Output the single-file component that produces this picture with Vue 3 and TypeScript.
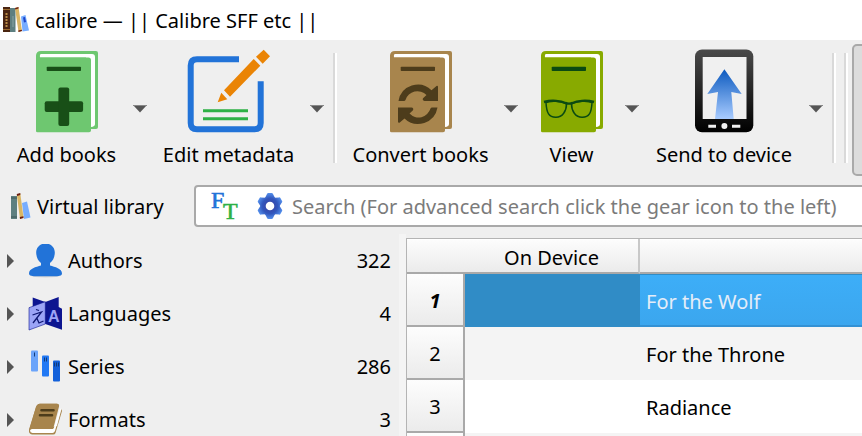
<script setup lang="ts">
import { ref } from 'vue'

type ToolIcon = 'add' | 'edit' | 'convert' | 'view' | 'send'
type CategoryIcon = 'authors' | 'languages' | 'series' | 'formats'

interface Tool {
  icon: ToolIcon
  label: string
  separated?: boolean
}

interface Category {
  icon: CategoryIcon
  label: string
  count: number
}

const tools: Tool[] = [
  { icon: 'add', label: 'Add books' },
  { icon: 'edit', label: 'Edit metadata', separated: true },
  { icon: 'convert', label: 'Convert books' },
  { icon: 'view', label: 'View' },
  { icon: 'send', label: 'Send to device' },
]

const bookColors: Record<string, { cover: string; ink: string }> = {
  add: { cover: '#6ec770', ink: '#184f17' },
  convert: { cover: '#a8854d', ink: '#4d3c1b' },
  view: { cover: '#88aa00', ink: '#0b4a12' },
}

const categories: Category[] = [
  { icon: 'authors', label: 'Authors', count: 322 },
  { icon: 'languages', label: 'Languages', count: 4 },
  { icon: 'series', label: 'Series', count: 286 },
  { icon: 'formats', label: 'Formats', count: 3 },
]

const books: string[] = ['For the Wolf', 'For the Throne', 'Radiance']
const selected = ref(0)
const query = ref('')
const teeth = [0, 60, 120, 180, 240, 300]
</script>

<template>
  <div class="window">
    <header class="titlebar">
      <svg class="app-icon" viewBox="0 0 26 26" aria-hidden="true">
        <rect x="0" y="0" width="7" height="25" fill="#4a2511" />
        <path d="M0 2.5H7M0 22.5H7" stroke="#9a6a2e" />
        <path d="M3.5 6V20" stroke="#b98a45" stroke-width="2" stroke-dasharray="2 1" />
        <rect x="7" y="1" width="5.500" height="24" fill="#5d7f80" />
        <path d="M10 9V20" stroke="#8aa5a4" />
        <path d="M18 9.500L22.500 8L26 23.500L19.500 24.500Z" fill="#77adff" />
        <path d="M20 10.500L22 10L23 15L21 15.500Z" fill="#1c44c8" />
        <path d="M12 1L15.500 0L19 24L15.500 25Z" fill="#d9b665" />
        <path d="M12 1L15.500 0V1.500L12.300 2.500ZM15.300 23.500L18.800 22.800L19 24L15.500 25Z" fill="#6b1d12" />
      </svg>
      <h1 class="title">calibre — || Calibre SFF etc ||</h1>
    </header>

    <nav class="toolbar" aria-label="Main toolbar">
      <div v-for="tool in tools" :key="tool.icon" class="tool" :class="[tool.icon, { separated: tool.separated }]">
        <button type="button" class="tool-main">
          <svg v-if="bookColors[tool.icon]" class="tool-icon" width="62" height="84" viewBox="0 -2 62 84" aria-hidden="true">
            <path d="M5 0H60Q62 0 62 2V76Q62 78 60 78H0V5Q0 0 5 0Z" :fill="bookColors[tool.icon].cover" />
            <path d="M5 3H56Q59 3 59 6V73Q59 75.500 55 76H50V6.500H4Q3.500 3 5 3Z" fill="#fff" />
            <path d="M0 4L4 6.500H52.500Q55 6.500 55 9V79.500Q55 81.300 53 81.300H1.500Q0 81.300 0 80Z" :fill="bookColors[tool.icon].cover" />
            <rect x="10.700" y="15.700" width="34.300" height="4.300" rx=".8" :fill="bookColors[tool.icon].ink" />
            <g v-if="tool.icon === 'add'" :fill="bookColors.add.ink">
              <rect x="8.700" y="50.300" width="38.400" height="10.800" rx="2" />
              <rect x="22.400" y="36.600" width="10.800" height="38.400" rx="2" />
            </g>
            <g v-else-if="tool.icon === 'convert'" :fill="bookColors.convert.ink">
              <path d="M8.500 50A19.600 19.600 0 0 1 41.500 39.200L46.500 34.900Q48 34.500 48 36V50H34.500Q32 49.500 33 47.300L36.500 44A12.500 12.500 0 0 0 15.500 49Q15 50 14 50Z" />
              <path transform="rotate(180 28 53.300)" d="M8.500 50A19.600 19.600 0 0 1 41.500 39.200L46.500 34.900Q48 34.500 48 36V50H34.500Q32 49.500 33 47.300L36.500 44A12.500 12.500 0 0 0 15.500 49Q15 50 14 50Z" />
            </g>
            <g v-else fill="none" :stroke="bookColors.view.ink" stroke-width="1.500">
              <path d="M5 51.500C10 49.500 20 49.800 25.500 52.800C25.500 60 21.500 66.300 15 66.300C8 66.500 5.500 62 5 51.500Z" />
              <path d="M51 51.500C46 49.500 36 49.800 30.500 52.800C30.500 60 34.500 66.300 41 66.300C48 66.500 50.500 62 51 51.500Z" />
              <path d="M3 51C11 48.800 20 50 24.500 52Q28 53.200 31.500 52C36 50 45 48.800 53 51" stroke-width="2.400" />
            </g>
          </svg>

          <svg v-else-if="tool.icon === 'edit'" class="tool-icon" width="84" height="84" viewBox="0 0 84 84" aria-hidden="true">
            <path d="M52 10.200H10Q3.700 10.200 3.700 16.500V74Q3.700 80.300 10 80.300H67.400Q73.700 80.300 73.700 74V32.300" fill="none" stroke="#2273d8" stroke-width="6" />
            <path d="M16 61.700H61M16 69.700H61" stroke="#2eb146" stroke-width="3" />
            <path d="M76.700 .7L83 7.300L75.700 14.700L69 7.700ZM66.700 10L73.300 16.700L43 47.700L37 41.300ZM34.300 43.700L40.300 50.300L30.700 53.300Z" fill="#ea8405" />
          </svg>

          <svg v-else class="tool-icon" width="60" height="84" viewBox="0 0 60 84" aria-hidden="true">
            <defs>
              <linearGradient id="body" x1="0" y1="0" x2="0" y2="1">
                <stop offset="0" stop-color="#4a4a4a" />
                <stop offset="1" stop-color="#000" />
              </linearGradient>
              <linearGradient id="beam" x1="0" y1="0" x2="0" y2="1">
                <stop offset="0" stop-color="#0c5abf" />
                <stop offset="1" stop-color="#a9ccff" />
              </linearGradient>
            </defs>
            <rect x="1" y=".500" width="58.300" height="82.800" rx="7" fill="url(#body)" />
            <rect x="8.700" y="8" width="43.800" height="62" fill="#f0f0f0" />
            <path d="M30.400 20.300L47.700 45L37.300 43L39.700 70H21L24 43L13.300 45Z" fill="url(#beam)" />
            <path d="M14.300 77.200H22M38 77.200H46.300" stroke="#f0f0f0" stroke-width="3" />
            <circle cx="30.400" cy="77" r="3" fill="#f0f0f0" />
          </svg>
          <span class="tool-label">{{ tool.label }}</span>
        </button>
        <button type="button" class="tool-drop" :aria-label="tool.label + ' menu'">
          <svg width="14" height="8" viewBox="0 0 14 8" aria-hidden="true">
            <path d="M0 0H14L7 7.500Z" fill="#555" />
            <path d="M0 .5H14" stroke="#888" />
          </svg>
        </button>
      </div>
      <span class="rule"></span>
      <span class="rule"></span>
      <span class="pressed"></span>
    </nav>

    <div class="searchbar">
      <button type="button" class="library">
        <svg width="20" height="27" viewBox="0 0 20 27" aria-hidden="true">
          <rect x="0" y="3" width="6" height="23" fill="#5d7f80" />
          <path d="M0 5H6M0 24H6" stroke="#3c5657" />
          <path d="M11 10L16 8.500L19.500 24.500L13 26Z" fill="#77adff" />
          <path d="M5.800 1.500L9.300 .5L12.500 24.500L9 26Z" fill="#d9b665" />
          <path d="M5.800 1L9.300 0V2L6 3ZM8.800 24L12.400 23.200L12.500 25L9 26Z" fill="#6b1d12" />
        </svg>
        <span>Virtual library</span>
      </button>
      <div class="search-box">
        <button type="button" class="icon-button" aria-label="Full text search">
          <svg class="letters" width="28" height="32" viewBox="0 0 28 32" aria-hidden="true">
            <text class="serif" x="0" y="18" fill="#2273d8" stroke="#2273d8">F</text>
            <text class="serif" x="12" y="29" fill="#2eb146" stroke="#2eb146">T</text>
          </svg>
        </button>
        <button type="button" class="icon-button" aria-label="Advanced search">
          <svg width="26" height="28" viewBox="-13 -14 26 28" aria-hidden="true">
            <defs>
              <radialGradient id="gear" gradientUnits="userSpaceOnUse" cx="0" cy="0" r="13">
                <stop offset="0" stop-color="#3b3b9b" />
                <stop offset=".6" stop-color="#3257bd" />
                <stop offset="1" stop-color="#5590ec" />
              </radialGradient>
            </defs>
            <g fill="url(#gear)">
              <circle r="9.800" />
              <path v-for="angle in teeth" :key="angle" :transform="`rotate(${angle})`" d="M-5 -8L-3 -12Q-2.700 -13 -1.700 -13H1.700Q2.700 -13 3 -12L5 -8Z" />
            </g>
            <circle r="4.300" fill="#fff" />
          </svg>
        </button>
        <input v-model="query" type="text" aria-label="Search" placeholder="Search (For advanced search click the gear icon to the left)" />
      </div>
    </div>

    <main class="content">
      <ul class="categories">
        <li v-for="category in categories" :key="category.icon">
          <button type="button" class="category">
            <svg class="expander" width="7" height="14" viewBox="0 0 7 14" aria-hidden="true">
              <path d="M0 0L7 7L0 14Z" fill="#555" />
            </svg>
            <svg v-if="category.icon === 'authors'" width="34" height="34" viewBox="0 0 34 34" aria-hidden="true">
              <ellipse cx="17.500" cy="32" rx="14" ry="1.500" fill="#d5d5d5" />
              <path d="M17.500 -.5C23 -.5 27 3.500 26.800 9C26.600 13 25 17 22 19V21.500C27 23 34 24.500 34 29.500C34 33 28 32.300 17.500 32.300C7 32.300 1 33 1 29.500C1 24.500 8 23 13 21.500V19C10 17 8.400 13 8.200 9C8 3.500 12 -.5 17.500 -.5Z" fill="#2273d8" />
            </svg>
            <svg v-else-if="category.icon === 'languages'" width="34" height="34" viewBox="0 0 34 34" aria-hidden="true">
              <path d="M4.700 .5L17.300 5L30.700 0V10L34 11.700V32.700L17.300 27L4.700 20Z" fill="#0d1590" />
              <path d="M1 10.700L17.300 4.700V27L1 33Z" fill="#9ba4f6" stroke="#0d1590" stroke-width=".6" />
              <path d="M8 12.500L11 13.500M4.500 18L13.500 15L5 26M9 21.500L11 26L15.500 24" fill="none" stroke="#0d1570" stroke-width="1.300" />
              <text class="latin" x="20" y="25" fill="#9ba4f6">A</text>
            </svg>
            <svg v-else-if="category.icon === 'series'" width="34" height="34" viewBox="0 0 34 34" aria-hidden="true">
              <rect x="3" y=".5" width="7" height="21" rx="1" fill="#6ba4fa" />
              <rect x="14" y="5.500" width="7" height="21" rx="1" fill="#2279f4" />
              <rect x="25" y="10.500" width="7" height="21" rx="1" fill="#1260da" />
              <path d="M6.500 2.500V6.500M16.500 7.500V11.500M18.500 7.500V11.500M26.500 12.500V16.500M28.500 12.500V16.500M30.500 12.500V16.500" stroke="#123a78" />
            </svg>
            <svg v-else width="34" height="34" viewBox="0 0 34 34" aria-hidden="true">
              <path d="M12 .8H29Q31 1 30.500 3L25 24L29 23L33.500 6L34 8L27.500 30Q27 31.500 25 31.500H4Q.5 31 1 26.500L8 4Q9 1 12 .8Z" fill="#a8854d" />
              <path d="M4 26H24Q25.500 26 26 24.500L32 5L33 6.500L27 28Q26 30 24.500 30H4.500Q2 29.500 2 27.500Q2.500 26 4 26Z" fill="#fff" />
              <path d="M12 .8H29Q31.500 1 31 3.500L25.500 24.500Q25 26 23.500 26H4Q2 26 1.500 26L8 4Q9 1 12 .8Z" fill="#a8854d" />
              <path d="M13.500 7.300H25.500M12 12.300H24" stroke="#4d3c1b" stroke-width="2.600" stroke-linecap="round" />
            </svg>
            <span class="category-name">{{ category.label }}</span>
            <span class="category-count">{{ category.count }}</span>
          </button>
        </li>
      </ul>

      <div class="book-list">
        <table>
          <thead>
            <tr>
              <th class="corner"></th>
              <th class="device" scope="col">On Device</th>
              <th scope="col"></th>
            </tr>
          </thead>
          <tbody>
            <tr v-for="(book, index) in books" :key="index" :class="{ selected: index === selected }" @click="selected = index">
              <th scope="row">{{ index + 1 }}</th>
              <td class="device-cell"></td>
              <td class="book-title">{{ book }}</td>
            </tr>
            <tr>
              <th></th>
              <td></td>
              <td></td>
            </tr>
          </tbody>
        </table>
      </div>
    </main>
  </div>
</template>

<style>
body {
  margin: 0;
  background: #efefef;
}
</style>

<style scoped>
.window {
  display: flex;
  flex-direction: column;
  height: 100vh;
  overflow: hidden;
  background: #efefef;
  color: #000;
  font-family: "Noto Sans", "Open Sans", sans-serif;
  font-size: 20px;
  line-height: 28px;
}

button,
input {
  margin: 0;
  padding: 0;
  border: 0;
  background: none;
  color: inherit;
  font: inherit;
}

svg {
  display: block;
  flex: none;
}

.titlebar {
  display: flex;
  flex: none;
  align-items: center;
  gap: 6px;
  height: 40px;
  padding-left: 3px;
  background: #fff;
}

.app-icon {
  width: 26px;
  height: 26px;
}

.title {
  margin: 0;
  padding-top: 2px;
  font-size: 20px;
  font-weight: 400;
  white-space: nowrap;
}

.toolbar {
  display: flex;
  flex: none;
  align-items: flex-start;
  height: 139px;
  padding-left: 6px;
}

.tool {
  display: flex;
  flex: none;
  padding-top: 9px;
}

.tool.separated {
  margin-right: 8px;
  padding: 0 3px 0 0;
  border-right: 2px solid #d9d9d9;
  box-shadow: 2px 0 #fff;
}

.tool.separated,
.rule {
  height: 110px;
  margin-top: 13px;
}

.tool.separated .tool-main,
.tool.separated .tool-drop {
  margin-top: -4px;
}

.tool-main {
  display: flex;
  flex-direction: column;
  align-items: center;
  gap: 8px;
  width: 155px;
  white-space: nowrap;
}

.add .tool-main {
  width: 121px;
}

.edit .tool-main {
  width: 151px;
}

.view .tool-main {
  width: 95px;
}

.send .tool-main {
  width: 158px;
}

.tool-label {
  display: block;
}

.tool-drop {
  display: flex;
  align-items: center;
  justify-content: center;
  width: 26px;
  height: 120px;
}

.rule {
  flex: none;
  width: 2px;
  margin-right: 8px;
  border-right: 2px solid #fff;
  background: #d9d9d9;
}

.tool + .rule {
  margin-left: 3px;
}

.rule + .rule {
  margin-right: 4px;
}

.pressed {
  box-sizing: border-box;
  flex: 1;
  height: 132px;
  margin: 4px -6px 0 0;
  border: 2px solid #a9a9a9;
  border-radius: 5px;
  background: #dcdcdc;
}

.searchbar {
  display: flex;
  flex: none;
  align-items: center;
  box-sizing: border-box;
  height: 55px;
  padding-bottom: 1px;
}

.library {
  display: flex;
  align-items: center;
  gap: 6px;
  flex: none;
  box-sizing: border-box;
  width: 194px;
  padding: 1px 0 0 11px;
  white-space: nowrap;
}

.search-box {
  display: flex;
  flex: 1;
  align-items: center;
  box-sizing: border-box;
  height: 42px;
  margin-right: -6px;
  padding-left: 15px;
  border: 2px solid #a9a9a9;
  border-radius: 4px;
  background: #fff;
}

.icon-button {
  flex: none;
  margin-right: 18px;
}

.icon-button + .icon-button {
  margin-right: 9px;
}

.search-box input {
  flex: 1;
  min-width: 0;
  padding-top: 2px;
  outline: 0;
}

.search-box input::placeholder {
  color: #7b7b7b;
  opacity: 1;
}

.letters {
  overflow: visible;
}

.serif {
  font-family: "Liberation Serif", serif;
  font-size: 24px;
  stroke-width: 0.6;
}

.latin {
  font-family: "Liberation Sans", sans-serif;
  font-size: 16px;
  font-weight: 700;
}

.content {
  display: flex;
  flex: 1;
  min-height: 0;
}

.categories {
  flex: none;
  width: 399px;
  margin: 0;
  padding: 0;
  list-style: none;
}

.category {
  display: flex;
  align-items: center;
  box-sizing: border-box;
  width: 100%;
  height: 53px;
  padding: 0 8px 0 7px;
  text-align: left;
}

.expander {
  margin-right: 14px;
}

.category-name {
  flex: 1;
  margin-left: 6px;
}

.book-list {
  flex: 1;
  min-width: 0;
  padding: 4px 0 0 7px;
  background: linear-gradient(90deg, #f4f4f4 7px, #efefef 7px);
}

table {
  width: 100%;
  border-collapse: separate;
  border-spacing: 0;
  table-layout: fixed;
  border-top: 1px solid #b4b4b4;
  border-left: 1px solid #b4b4b4;
  background: #fff;
}

th,
td {
  box-sizing: border-box;
  padding: 2px 0 0;
}

th {
  font-weight: 400;
  text-align: center;
}

thead th {
  height: 35px;
  padding-top: 5px;
  border-bottom: 2px solid #a9a9a9;
  background: linear-gradient(#fdfdfd, #ebebeb);
  box-shadow: inset 0 1px #fff;
}

.corner {
  width: 58px;
}

.device {
  width: 175px;
  border-right: 2px solid #c8c8c8;
}

tbody th {
  height: 53px;
  padding-top: 3px;
  border-right: 2px solid #a9a9a9;
  border-bottom: 2px solid #a9a9a9;
  background: linear-gradient(#fdfdfd, #ebebeb);
}

.book-title {
  padding-left: 6px;
  white-space: nowrap;
}

tbody tr:nth-child(even) td {
  background: #f4f4f4;
}

.selected th {
  font-style: italic;
  font-weight: 700;
}

.selected .device-cell {
  background: #308cc6;
}

.selected .book-title {
  background: linear-gradient(#3daef8, #3ba6ee);
  box-shadow: inset 0 1px #308cc6, inset 0 -2px #3391d4;
  color: #e4edf8;
}
</style>
